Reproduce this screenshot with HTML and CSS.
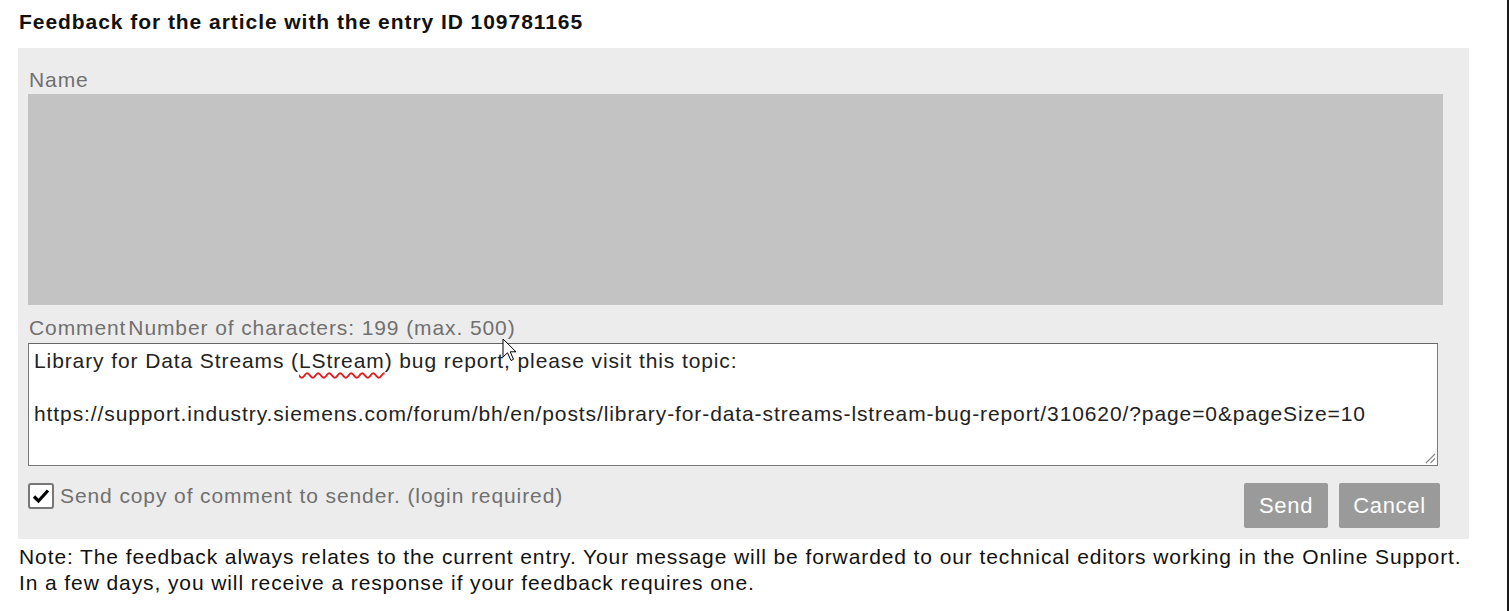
FILE: index.html
```html
<!DOCTYPE html>
<html lang="en">
<head>
<meta charset="utf-8">
<title>Feedback</title>
<link rel="stylesheet" href="styles.css">
</head>
<body>
<div class="page">
  <h2 class="title">Feedback for the article with the entry ID 109781165</h2>
  <div class="panel">
    <div class="label name-label">Name</div>
    <div class="name-box"></div>
    <div class="label comment-label"><span>Comment</span><span>Number of characters: 199 (max. 500)</span></div>
    <div class="textarea">
      <div class="line">Library for Data Streams (<span class="misspelled">LStream</span>) bug report, please visit this topic:</div>
      <div class="line">&nbsp;</div>
      <div class="line">https://support.industry.siemens.com/forum/bh/en/posts/library-for-data-streams-lstream-bug-report/310620/?page=0&amp;pageSize=10</div>
      <svg class="grip" width="13" height="13" viewBox="0 0 13 13"><path d="M12 3 L3 12 M12 7.5 L7.5 12" stroke="#8a8a8a" stroke-width="1.2" fill="none"/></svg>
    </div>
    <div class="actions">
      <label class="check">
        <span class="box"><svg width="20" height="20" viewBox="0 0 20 20"><path d="M3 10.5 L7.5 15 L17 4.5" stroke="#000" stroke-width="3.2" fill="none" stroke-linejoin="miter"/></svg></span>
        <span class="check-text">Send copy of comment to sender. (login required)</span>
      </label>
      <div class="buttons">
        <button class="btn send">Send</button>
        <button class="btn cancel">Cancel</button>
      </div>
    </div>
    <svg class="cursor" width="16" height="26" viewBox="0 0 16 26"><path d="M1 1 L1 19 L5.5 14.8 L9 22.5 L11.5 21.3 L8.2 13.8 L14 13.8 Z" fill="#fff" stroke="#000" stroke-width="1" stroke-linejoin="round"/></svg>
  </div>
  <p class="note">Note: The feedback always relates to the current entry. Your message will be forwarded to our technical editors working in the Online Support.<br>In a few days, you will receive a response if your feedback requires one.</p>
</div>
</body>
</html>
```

FILE: styles.css
```css
* { box-sizing: border-box; }
html, body { margin: 0; padding: 0; background: #fff; }
body {
  font-family: "Liberation Sans", Arial, sans-serif;
  font-size: 21px;
  letter-spacing: 0.9px;
  color: #111;
}
.page {
  min-height: 611px;
  width: 1509px;
  border-right: 2px solid #1a1a1a;
  padding: 11px 0 0 18px;
}
.title {
  margin: 0 0 15px 1px;
  font-size: 21px;
  letter-spacing: 0.95px;
  line-height: 22px;
  font-weight: bold;
  color: #111;
}
.panel {
  position: relative;
  width: 1451px;
  background: #ececec;
  padding: 20px 26px 11px 10px;
}
.label {
  color: #707070;
  line-height: 24px;
}
.name-label { margin: 0 0 2px 1px; }
.name-box {
  height: 211px;
  background: #c3c3c3;
}
.comment-label {
  margin: 11px 0 3px 1px;
  display: flex;
  gap: 2px;
}
.textarea {
  position: relative;
  width: 1410px;
  height: 123px;
  background: #fff;
  border: 1px solid #7a7a7a;
  border-top-color: #666;
  padding: 4px 5px;
  color: #222;
  line-height: 26.5px;
}
.misspelled {
  text-decoration: underline wavy #e02020;
  text-decoration-thickness: 1.5px;
  text-underline-offset: 4px;
}
.grip { position: absolute; right: 1px; bottom: 1px; }
.actions {
  display: flex;
  justify-content: space-between;
  align-items: flex-start;
  margin-top: 17px;
  padding-right: 3px;
}
.check {
  display: flex;
  align-items: center;
  gap: 6px;
  margin-left: 0;
}
.box {
  width: 26px;
  height: 26px;
  border: 2px solid #777;
  border-radius: 3px;
  background: #fff;
  display: flex;
  align-items: center;
  justify-content: center;
}
.check-text { color: #707070; line-height: 24px; }
.buttons { display: flex; gap: 11px; }
.btn {
  font-family: "Liberation Sans", Arial, sans-serif;
  font-size: 22px;
  letter-spacing: 0.7px;
  color: #fff;
  background: #9a9a9a;
  border: none;
  border-radius: 2px;
  height: 45px;
  padding: 0;
}
.send { width: 84px; }
.cancel { width: 101px; }
.cursor { position: absolute; left: 484px; top: 290px; }
.note {
  margin: 5px 0 0 1px;
  line-height: 26px;
  color: #111;
}
```
